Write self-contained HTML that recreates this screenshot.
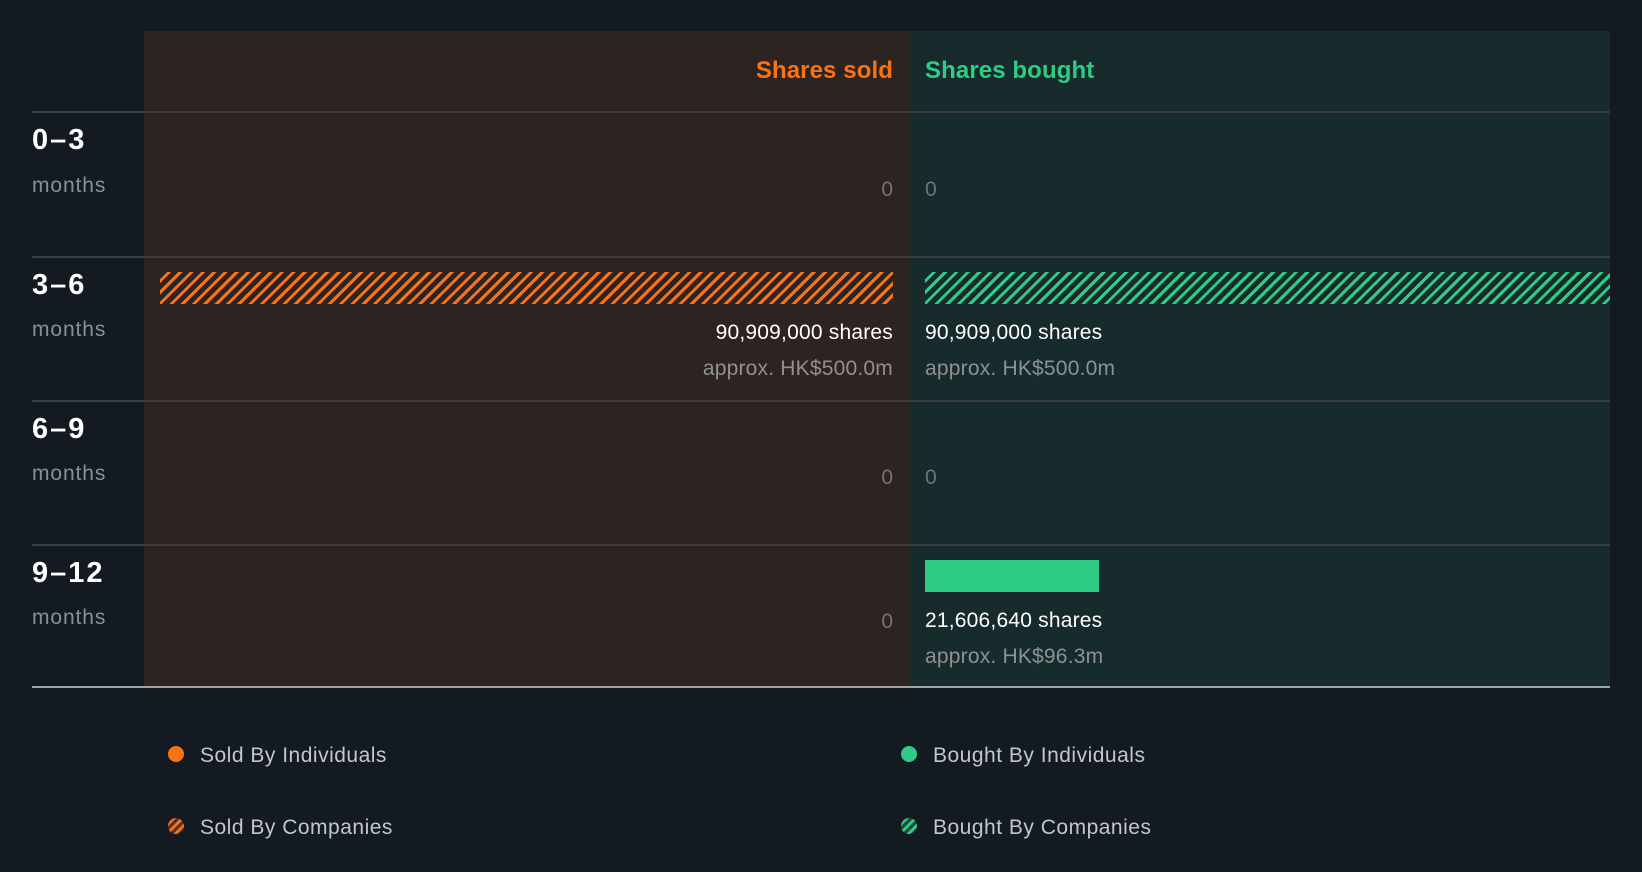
<!DOCTYPE html>
<html><head><meta charset="utf-8"><style>
*{margin:0;padding:0;box-sizing:border-box}
body{width:1642px;height:872px;background:#141a22;font-family:"Liberation Sans",sans-serif;position:relative;overflow:hidden}
.a{position:absolute;white-space:nowrap}
.sold{left:144px;top:31px;width:765px;height:656px;background:#2d2422}
.bought{left:909px;top:31px;width:701px;height:656px;background:#172b2c}
.line{left:32px;width:1578px;height:2px;background:#3a3d42}
.rl{left:32px;font-size:29px;font-weight:bold;color:#fff;line-height:1;letter-spacing:2px}
.mo{left:32px;font-size:21px;color:#8a8f96;line-height:1;letter-spacing:0.9px}
.z{font-size:21px;color:#6f7478;line-height:1}
.sh{font-size:21px;color:#fff;line-height:1;letter-spacing:0.2px}
.ap{font-size:21px;color:#8e9193;line-height:1;letter-spacing:0.2px}
.r{right:749px;text-align:right}
.l{left:925px}
.hatch-o{background:repeating-linear-gradient(135deg,#2d2422 0 5px,#f97316 5px 8px)}
.hatch-g{background:repeating-linear-gradient(135deg,#172b2c 0 5px,#2ecc85 5px 8px)}
.lg{font-size:21px;color:#c3c6ca;line-height:1;letter-spacing:0.5px}
.dot{width:16px;height:16px;border-radius:50%}
</style></head><body>
<div class="a sold"></div>
<div class="a bought"></div>
<div class="a" style="right:749px;top:57px;font-size:24px;font-weight:bold;color:#f97316;letter-spacing:0.1px">Shares sold</div>
<div class="a" style="left:925px;top:57px;font-size:24px;font-weight:bold;color:#2ecc85;letter-spacing:0.1px">Shares bought</div>

<div class="a line" style="top:111px"></div>
<div class="a line" style="top:256px"></div>
<div class="a line" style="top:400px"></div>
<div class="a line" style="top:544px"></div>
<div class="a" style="left:32px;top:686px;width:1578px;height:2px;background:#a0a3a8"></div>

<div class="a rl" style="top:126px">0–3</div><div class="a mo" style="top:175px">months</div>
<div class="a rl" style="top:271px">3–6</div><div class="a mo" style="top:319px">months</div>
<div class="a rl" style="top:415px">6–9</div><div class="a mo" style="top:463px">months</div>
<div class="a rl" style="top:559px">9–12</div><div class="a mo" style="top:607px">months</div>

<div class="a z r" style="top:179px">0</div><div class="a z l" style="top:179px">0</div>

<div class="a hatch-o" style="left:160px;top:272px;width:733px;height:32px"></div>
<div class="a hatch-g" style="left:925px;top:272px;width:685px;height:32px"></div>
<div class="a sh r" style="top:322px">90,909,000 shares</div>
<div class="a ap r" style="top:358px">approx. HK$500.0m</div>
<div class="a sh l" style="top:322px">90,909,000 shares</div>
<div class="a ap l" style="top:358px">approx. HK$500.0m</div>

<div class="a z r" style="top:467px">0</div><div class="a z l" style="top:467px">0</div>

<div class="a z r" style="top:611px">0</div>
<div class="a" style="left:925px;top:560px;width:174px;height:32px;background:#2ecc85"></div>
<div class="a sh l" style="top:610px">21,606,640 shares</div>
<div class="a ap l" style="top:646px">approx. HK$96.3m</div>

<div class="a dot" style="left:168px;top:746px;background:#f97316"></div>
<div class="a lg" style="left:200px;top:745px">Sold By Individuals</div>
<div class="a dot" style="left:168px;top:818px;background:repeating-linear-gradient(135deg,#5a3020 0 3px,#f97316 3px 6px)"></div>
<div class="a lg" style="left:200px;top:817px">Sold By Companies</div>
<div class="a dot" style="left:901px;top:746px;background:#2ecc85"></div>
<div class="a lg" style="left:933px;top:745px">Bought By Individuals</div>
<div class="a dot" style="left:901px;top:818px;background:repeating-linear-gradient(135deg,#1e4a3a 0 3px,#2ecc85 3px 6px)"></div>
<div class="a lg" style="left:933px;top:817px">Bought By Companies</div>
</body></html>
